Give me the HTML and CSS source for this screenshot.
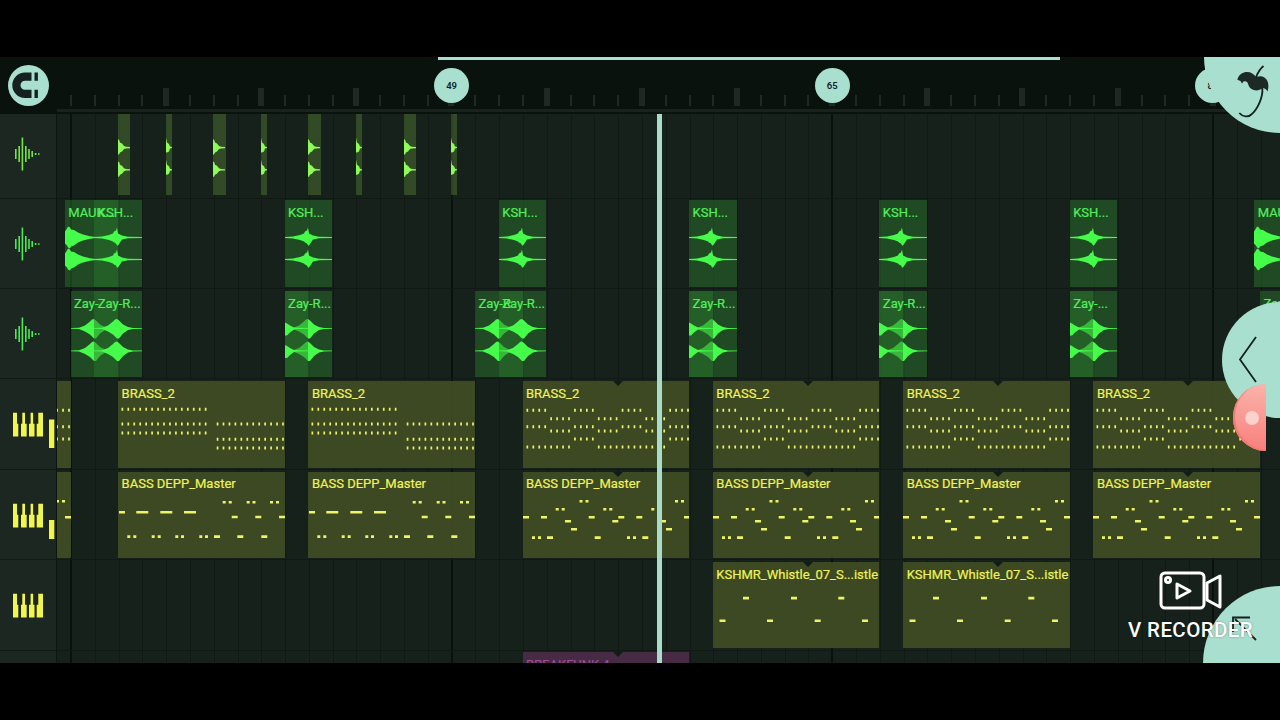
FILE: index.html
```
<!DOCTYPE html>
<html lang="en">
<head>
  <meta charset="UTF-8">
  <meta name="viewport" content="width=device-width, initial-scale=1.0">
  <title>Playlist</title>
  <link rel="stylesheet" href="styles.css">
</head>
<body>
  <div class="app">
    <header class="header">
      <button class="snap">
        <svg width="41" height="41" viewBox="0 0 41 41">
          <path d="M23.5 7.5H17a12.7 12.7 0 0 0 0 25.4h6.500v-8.200H17a4.500 4.500 0 0 1 0-9h6.500z"/>
          <path d="M26.500 7.500h3.400v8.200h-3.400zM26.500 24.700h3.400v8.200h-3.400z"/>
        </svg>
      </button>
      <div class="ruler" id="ruler">
        <div class="ticks"></div>
        <div class="ticks-wide"></div>
        <div class="range"></div>
      </div>
    </header>
    <main class="tracks" id="tracks"></main>
    <div class="playhead"></div>

    <div class="corner corner-top">
      <svg width="76" height="76" viewBox="0 0 76 76">
        <path class="leaf" d="M33.300 22.700C35 17 39 15 43 15c4 0 7 2 9 5 3-1 7-1 9 1 4 3 4 9 2.500 13.500-1-2-3-3.500-5-3.500-3 3-8 3-11 1-2.500-1.500-3-4-4-6.500-1-1-3-1.500-4-1l-1.500 2-1.500-2.500z"/>
        <path class="stem" d="M51.700 21c1.500-4 4-9 7.800-12M58.300 31c1 9-5 22-11 26.500-3 3-8.500 2.500-12-1.500"/>
      </svg>
    </div>
    <div class="corner corner-side">
      <svg width="58" height="116" viewBox="0 0 58 116"><path d="M34 35L18 57.500L34 80"/></svg>
    </div>
    <div class="record"><span></span></div>
    <div class="corner corner-bottom">
      <svg width="77" height="77" viewBox="0 0 77 77">
        <path d="M30 46V31.500h17"/>
        <path class="dash" d="M32 33l21 21"/>
      </svg>
    </div>
    <div class="watermark">
      <svg width="64" height="40" viewBox="0 0 64 40">
        <rect x="2" y="2" width="43" height="35" rx="4"/>
        <circle cx="9" cy="9" r="2.500"/>
        <path d="M18 13v14l13-7zM48 12l13-7v31l-13-7z"/>
      </svg>
      <div>V RECORDER</div>
    </div>
  </div>
  <script src="script.js"></script>
</body>
</html>
```

FILE: styles.css
```
* {
  box-sizing: border-box;
}
body {
  margin: 0;
  padding: 57px 0;
  height: 720px;
  overflow: hidden;
  background: #000;
  font-family: Roboto, "Liberation Sans", sans-serif;
}
.app {
  position: relative;
  display: flex;
  flex-direction: column;
  height: 606px;
  overflow: hidden;
  background: #16211c;
}

/* header */
.header {
  display: flex;
  height: 57px;
  flex: none;
  background: #09120d;
}
.snap {
  flex: none;
  width: 41px;
  height: 41px;
  margin: 8px;
  padding: 0;
  border: none;
  border-radius: 50%;
  background: #a8dfcf;
}
.snap svg {
  display: block;
  fill: #14211e;
}
.ruler {
  position: relative;
  flex: 1;
}
.ruler::after {
  content: "";
  position: absolute;
  left: 0;
  right: 0;
  bottom: 2px;
  height: 3px;
  background: #19221d;
}
.ticks,
.ticks-wide {
  position: absolute;
  right: 0;
}
.ticks {
  left: 13px;
  top: 38px;
  height: 11px;
  background: repeating-linear-gradient(90deg, #202923 0 2px, transparent 2px 23.79px);
}
.ticks-wide {
  left: 106px;
  top: 31px;
  height: 18px;
  background: repeating-linear-gradient(90deg, #202823 0 6px, transparent 6px 95.16px);
}
.range {
  position: absolute;
  left: 380.5px;
  top: 0;
  width: 622px;
  height: 3px;
  background: #a8dfcf;
}
.marker {
  position: absolute;
  top: 11px;
  width: 35px;
  height: 35px;
  margin-left: -17px;
  border-radius: 50%;
  background: #a8dfcf;
  color: #14211e;
  font-size: 9.5px;
  font-weight: 600;
  line-height: 35px;
  text-align: center;
}

/* tracks */
.tracks {
  isolation: isolate;
}
.track {
  display: flex;
  height: 90.4px;
}
.track:first-child {
  height: 84.6px;
}
.track-head {
  flex: none;
  width: 57px;
  border-right: 1px solid #0d1511;
  border-bottom: 1px solid #121b16;
  background: #1d2722;
}
.track-head svg {
  display: block;
  width: 56px;
  height: 90px;
}
.track:first-child .track-head svg {
  margin-top: -5.5px;
}
.lane {
  position: relative;
  flex: 1;
  overflow: hidden;
  border-bottom: 1px solid #101914;
  background:
    repeating-linear-gradient(90deg, #09110d 0 2px, transparent 2px 380.64px) 13px 0 / 2000px 100% no-repeat,
    repeating-linear-gradient(90deg, #101914 0 1px, transparent 1px 23.79px) 13.5px 0 / 2000px 100% no-repeat,
    #16211c;
}
.clip {
  position: absolute;
  top: 1.9px;
  height: 86.4px;
  overflow: hidden;
  font-size: 13px;
  line-height: 15px;
  white-space: nowrap;
}
.track:first-child .clip {
  top: 0;
  height: 81px;
}
.clip svg {
  position: absolute;
  left: 0;
  top: 0;
}
.clip span {
  position: absolute;
  z-index: 1;
  left: 3.5px;
  top: 4.8px;
  -webkit-text-stroke: 0.2px;
}
.clip-lime {
  background: rgba(75, 110, 48, 0.55);
  fill: #8dfb58;
}
.clip-green {
  background: rgba(41, 116, 44, 0.5);
  color: #52ef5c;
  fill: #46fc4a;
}
.clip-yellow {
  background: rgba(62, 75, 34, 0.96);
  color: #f0f35a;
  fill: #eef46a;
}
.clip-purple {
  background: #472b45;
  color: #a04b96;
}
.loop::after {
  content: "";
  position: absolute;
  left: 90px;
  top: 0;
  border: 5px solid transparent;
  border-top-color: #121c17;
  border-bottom: none;
}
.icon-lime {
  fill: #73e644;
}
.icon-green {
  fill: #4be955;
}
.icon-yellow {
  fill: #f1f64a;
}

/* overlays */
.playhead {
  position: absolute;
  left: 657px;
  top: 57px;
  bottom: 0;
  width: 5px;
  background: #a9dcc8;
}
.corner {
  position: absolute;
  right: 0;
  background: #a8dfcf;
}
.corner svg {
  display: block;
  fill: none;
  stroke: #14211e;
  stroke-width: 1.8;
}
.corner-top {
  top: 0;
  width: 76px;
  height: 76px;
  border-bottom-left-radius: 100%;
}
.corner-top .leaf {
  fill: #1d2925;
  stroke: none;
}
.corner-side {
  top: 245px;
  width: 58px;
  height: 116px;
  border-radius: 58px 0 0 58px;
}
.corner-bottom {
  bottom: 0;
  width: 77px;
  height: 77px;
  border-top-left-radius: 100%;
}
.corner-bottom .dash {
  stroke-dasharray: 9 2;
}
.record {
  position: absolute;
  right: 14px;
  top: 327px;
  display: flex;
  align-items: center;
  justify-content: center;
  width: 33px;
  height: 67px;
  border-radius: 33px 0 0 33px;
  background: linear-gradient(#fbb3ac, #f97f7b);
  box-shadow: inset 2px -1px 1px #ee7b76;
}
.record span {
  width: 14px;
  height: 14px;
  margin-left: 4px;
  border-radius: 50%;
  background: #fdd2cd;
}
.watermark {
  position: absolute;
  left: 1127px;
  top: 514px;
  width: 127px;
  color: #fff;
  font-size: 20.5px;
  font-weight: 500;
  line-height: 24px;
  text-align: center;
  white-space: nowrap;
  text-shadow: 0 0 2px rgba(0, 0, 0, 0.4);
}
.watermark svg {
  display: block;
  margin: 0 0 7px 32px;
  fill: none;
  stroke: #fff;
  stroke-width: 3;
  stroke-linejoin: round;
}
.watermark div {
  letter-spacing: 0.4px;
}
```

FILE: script.js
```
const BAR = 23.79;
const ORIGIN = 13.5; // x of bar 33 inside a lane

// rows of [y, note width, x positions]
const brassX = (from, to) => Array.from({ length: to - from + 1 }, (_, i) => 3.5 + (from + i) * 5.95);
const groups = list => list.flatMap(g => brassX(g * 4, g * 4 + 3));

const patterns = {
  brassA: [
    [28.3, 2, brassX(0, 14)],
    [43, 2, brassX(0, 14).concat(brassX(16, 27))],
    [52, 2, brassX(0, 14)],
    [58.3, 2, brassX(16, 27)],
    [67, 2, brassX(16, 27)]
  ],
  brassB: [
    [29.3, 2, groups([0, 2, 4, 6])],
    [37.7, 2, groups([1, 3, 5])],
    [45.7, 2, groups([0, 2, 4, 6])],
    [50, 2, groups([1, 3, 5])],
    [58, 2, groups([2, 6])],
    [66, 2, groups([0, 1, 3, 4, 5])]
  ],
  bassA: [
    [30.5, 3, [104.7, 110.7, 128.7, 134.5, 152, 158]],
    [40.5, 6, [1]],
    [40.5, 12, [18.3, 42.3, 66]],
    [45.2, 6, [113.7, 137.3, 161]],
    [64.8, 3, [9.3, 15.3, 33.7, 39.7, 57.3, 63, 81.3, 87]],
    [64.8, 6, [96, 119.3, 143.3]]
  ],
  bassB: [
    [29.5, 3, [56.5, 62.5, 152, 158]],
    [37.5, 3, [32.7, 38.7, 80.3, 86.3, 128.3, 134.3]],
    [45.5, 6, [0, 18, 65.7, 95.3, 113.3, 161]],
    [49.5, 6, [42, 89.3, 137]],
    [57.5, 6, [48, 143]],
    [65.8, 3, [9, 15, 104, 110]],
    [65.8, 6, [24, 71.7, 119.3]]
  ],
  whistle: [
    [36.3, 6, [30, 78, 125.3]],
    [59, 6, [6.5, 54, 101.7, 149]]
  ]
};

// envelopes: [x, up, down] around each channel's centre line
const waves = {
  ksh: { y: [37.5, 59.5], env: [[0, .5, .5], [8, .9, .9], [15, 2.5, 2.5], [19, 4, 4], [20, 6, 5], [22, 7, 6], [23, 10, 8], [24, 4, 8], [28, 2, 2], [34, .8, .8], [48, .5, .5]] },
  mau: { y: [37.5, 59.5], env: [[0, 6, 6], [2, 9, 8], [3, 11, 10], [5, 10, 11], [6, 8, 9], [9, 7.500, 8], [13, 5, 5], [18, 3, 3], [25, 1.2, 1.2], [31, .5, .5], [53, .4, .4]] },
  zay: { y: [37.4, 59.9], env: [[0, .4, .4], [8, .7, .7], [14, 3, 3], [19, 7, 6], [21, 9, 8], [23, 9.500, 10], [25, 8, 10], [29, 4, 5], [34, 1.500, 1.500], [39, .5, .5], [48, .4, .4]] },
  tail: { y: [37.4, 59.9], env: [[0, 6, 7], [2, 5, 7], [5, 3, 4], [9, 1, 1], [13, .6, .6], [24, .4, .4]] },
  hit: { y: [33.6, 55.8], env: [[0, 8, 7], [1, 8, 7], [2, 5, 5], [4, 4, 4], [6, 1.500, 1.500], [8, .8, .8], [12, .6, .6]] },
  hitShort: { y: [33.6, 55.8], env: [[0, 10, 5], [1, 5, 5], [3, 3.500, 4], [4, 1, 1], [6, .5, .5]] }
};

function patternPath(name) {
  return patterns[name].map(([y, w, xs]) => {
    const noteWidth = w === 2 ? 1.7 : w;
    return xs.map(x => `M${x} ${y - 1.5}h${noteWidth}v${w === 2 ? 3 : 2.6}h-${noteWidth}z`).join('');
  }).join('');
}

function wavePath(name) {
  const { y, env } = waves[name];
  return y.map(c => {
    const top = env.map(([x, up]) => `${x} ${c - up}`);
    const bottom = env.map(([x, , down]) => `${x} ${c + down}`).reverse();
    return 'M' + top.concat(bottom).join('L') + 'z';
  }).join('');
}

// clip: [start bar, length in bars, label, drawing, loops]
const kshBars = [42, 51, 59, 67, 75];
const brassB = [26, 52, 60, 68, 76];
const tracks = [
  { color: 'lime', icon: 'wave', clips: [35, 37, 39, 41, 43, 45, 47, 49].map((b, i) =>
    i % 2 ? [b, .26, '', 'hitShort'] : [b, .52, '', 'hit']) },
  { color: 'green', icon: 'wave', clips: [
    [32.76, 2.24, 'MAUK...', 'mau'], [34, 2, 'KSH...', 'ksh'],
    ...kshBars.map(b => [b, 2, 'KSH...', 'ksh']),
    [82.76, 2.24, 'MAUK...', 'mau']
  ] },
  { color: 'green', icon: 'wave', clips: [
    [33, 2, 'Zay-', 'zay'], [34, 2, 'Zay-R...', 'zay'],
    [42, 2, 'Zay-R...', 'zay'], [42, 1, '', 'tail'],
    [50, 2, 'Zay-R', 'zay'], [51, 2, 'Zay-R...', 'zay'],
    [59, 2, 'Zay-R...', 'zay'], [59, 1, '', 'tail'],
    [67, 2, 'Zay-R...', 'zay'], [67, 1, '', 'tail'],
    [75, 2, 'Zay-...', 'zay'], [75, 1, '', 'tail'],
    [83, 2, 'Zay-R...', 'zay']
  ] },
  { color: 'yellow', icon: 'keys', level: [36.5, 28.5], clips: [
    [35, 7, 'BRASS_2', 'brassA'], [43, 7, 'BRASS_2', 'brassA'],
    [26, 7, '', 'brassB'],
    ...brassB.slice(1).map(b => [b, 7, 'BRASS_2', 'brassB', true])
  ] },
  { color: 'yellow', icon: 'keys', level: [46, 19], clips: [
    [35, 7, 'BASS DEPP_Master', 'bassA'], [43, 7, 'BASS DEPP_Master', 'bassA'],
    [26, 7, '', 'bassB'],
    ...brassB.slice(1).map(b => [b, 7, 'BASS DEPP_Master', 'bassB', true])
  ] },
  { color: 'yellow', icon: 'keys', clips: [60, 68].map(b => [b, 7, 'KSHMR_Whistle_07_S...istle', 'whistle', true]) },
  { color: 'purple', clips: [[52, 7, 'BREAKFUNK-4', '', true]] }
];

function iconPath(track) {
  if (track.icon === 'wave') {
    return [[15, 5], [18.4, 8], [21.6, 16.5], [25, 8], [28.2, 5], [31.4, 3], [34.8, 1], [38, .8]]
      .map(([x, h]) => `M${x} ${45 - h}h1.6v${h * 2}h-1.6z`).join('');
  }
  if (track.icon === 'keys') {
    const keys = 'M13 33.800h4v11h1.300v12.700h-5.300zM22.300 33.800h2.700v11h1.700v12.700h-5.700v-12.700h1.300z' +
      'M30.600 33.800h2.500v11h1.400v12.700h-5.500v-12.700h1.600zM38.300 33.800h4.700v23.700h-6.300v-12.700h1.600z';
    return keys + (track.level ? `M49 ${track.level[0] + 4}h5.300v${track.level[1]}h-5.300z` : '');
  }
  return '';
}

function renderClip([start, length, label, drawing, loops], color) {
  const left = ORIGIN + (start - 33) * BAR;
  const width = length * BAR;
  const path = patterns[drawing] ? patternPath(drawing) : waves[drawing] ? wavePath(drawing) : '';
  return `
    <div class="clip clip-${color} ${loops ? 'loop' : ''}" style="left:${left}px;width:${width}px">
      <svg width="${width}" height="87"><path d="${path}"/></svg>
      <span>${label}</span>
    </div>`;
}

document.getElementById('tracks').innerHTML = tracks.map(track => `
  <div class="track">
    <div class="track-head">
      <svg class="icon-${track.color}" viewBox="0 0 56 90"><path d="${iconPath(track)}"/></svg>
    </div>
    <div class="lane">${track.clips.map(c => renderClip(c, track.color)).join('')}</div>
  </div>`).join('');

[49, 65, 81].forEach(bar => {
  const marker = document.createElement('div');
  marker.className = 'marker';
  marker.style.left = ORIGIN + (bar - 33) * BAR + 'px';
  marker.textContent = bar;
  document.getElementById('ruler').appendChild(marker);
});
```
